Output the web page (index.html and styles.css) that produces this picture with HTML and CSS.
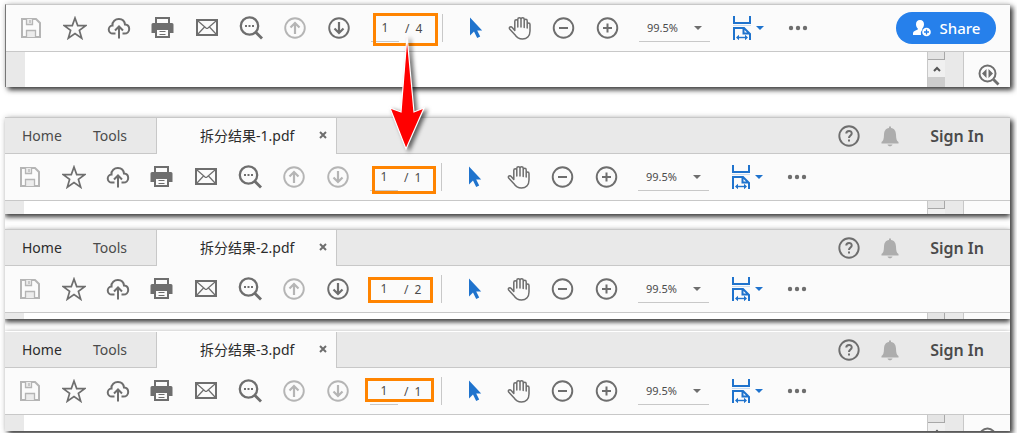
FILE: index.html
```
<!DOCTYPE html>
<html lang="zh">
<head>
    <meta charset="UTF-8">
    <meta name="viewport" content="width=device-width, initial-scale=1.0">
    <title>拆分结果</title>
    <link rel="stylesheet" href="styles.css">
</head>
<body>
    <!-- shared icons -->
    <svg class="sprite" aria-hidden="true">
        <symbol id="save" viewBox="0 0 24 24">
            <path d="M3 3h14l4 4v14H3z" fill="none" stroke="currentColor" stroke-width="2"/>
            <path d="M7.500 3v5.500h6V3M11 4v3M7.500 21v-6.500h9V21" fill="#ececec" stroke="currentColor" stroke-width="1.300"/>
        </symbol>
        <symbol id="star" viewBox="0 0 24 24">
            <path d="M12 2l2.700 7.600h8L16.400 14.400l2.300 7.800L12 17.600l-6.700 4.600 2.300-7.800L1.300 9.600h8z" fill="none" stroke="currentColor" stroke-width="1.700"/>
        </symbol>
        <symbol id="cloud" viewBox="0 0 24 24">
            <path d="M8.500 17.500H6a4 4 0 0 1-.5-8C5 5.500 8.500 2.900 12 3c3.300.1 5.700 2.400 6 5.600 2.600.2 4.200 2 4.200 4.300 0 2.600-2 4.600-4.700 4.600h-2" fill="none" stroke="currentColor" stroke-width="2"/>
            <path d="M12 22.500V11M8 14.500l4-4 4 4" fill="none" stroke="currentColor" stroke-width="2"/>
        </symbol>
        <symbol id="print" viewBox="0 0 24 24">
            <path d="M5 7V2h13v5" fill="none" stroke="currentColor" stroke-width="2"/>
            <path d="M2 7h19a1.500 1.500 0 0 1 1.500 1.500V17H19v-4H4v4H.5V8.500A1.500 1.500 0 0 1 2 7z" fill="currentColor"/>
            <path d="M5 13v8h13v-8z" fill="#fbfbfb" stroke="currentColor" stroke-width="2"/>
            <path d="M8.500 15.500h6M8.500 18.500h6" stroke="currentColor" stroke-width="1"/>
        </symbol>
        <symbol id="mail" viewBox="0 0 24 24">
            <path d="M2 4h20v15H2z" fill="none" stroke="currentColor" stroke-width="2"/>
            <path d="M3 5l8 7q1 .8 2 0l8-7M3 18l6.500-7M21 18l-6.500-7" fill="none" stroke="currentColor" stroke-width="1.200"/>
        </symbol>
        <symbol id="search" viewBox="0 0 24 24">
            <circle cx="10.500" cy="10" r="8.700" fill="none" stroke="currentColor" stroke-width="2.300"/>
            <path d="M16.500 16l6.500 6.500" stroke="currentColor" stroke-width="2.800"/>
            <path d="M6 9h2v2H6zM9.500 9h2v2h-2zM13 9h2v2h-2z" fill="currentColor"/>
        </symbol>
        <symbol id="up" viewBox="0 0 24 24">
            <circle cx="12" cy="12" r="9.800" fill="none" stroke="currentColor" stroke-width="1.900"/>
            <path d="M12 18V7M7.500 11.500L12 7l4.500 4.500" fill="none" stroke="currentColor" stroke-width="2.200"/>
        </symbol>
        <symbol id="down" viewBox="0 0 24 24">
            <circle cx="12" cy="12" r="9.800" fill="none" stroke="currentColor" stroke-width="1.900"/>
            <path d="M12 6v11M7.500 12.500L12 17l4.500-4.500" fill="none" stroke="currentColor" stroke-width="2.200"/>
        </symbol>
        <symbol id="pointer" viewBox="0 0 24 24">
            <path d="M6 1.500v18l4-4 3.200 6.500 3-1.400-3-6h5z" fill="currentColor"/>
        </symbol>
        <symbol id="hand" viewBox="0 0 24 24">
            <path d="M6.800 14.500V5.300c0-2.200 3-2.200 3 0V11 3.300c0-2.200 3.200-2.200 3.200 0V11 3.500c0-2.200 3.200-2.200 3.200 0V11.500 5c0-2.200 3-2.200 3 0v7V8.500c0-2 2.800-2 2.800 0V15c0 5-3.200 8-7.500 8-3.600 0-6-1.600-7.800-4.600L1.600 13c-.9-1.800 1.300-3 2.600-1.600z" fill="none" stroke="currentColor" stroke-width="1.500" stroke-linejoin="round"/>
        </symbol>
        <symbol id="minus" viewBox="0 0 24 24">
            <circle cx="11.500" cy="12" r="9.800" fill="none" stroke="currentColor" stroke-width="1.900"/>
            <path d="M7 12h9" stroke="currentColor" stroke-width="2"/>
        </symbol>
        <symbol id="plus" viewBox="0 0 24 24">
            <circle cx="11.500" cy="12" r="9.800" fill="none" stroke="currentColor" stroke-width="1.900"/>
            <path d="M7 12h9M11.500 7.500v9" stroke="currentColor" stroke-width="2"/>
        </symbol>
        <symbol id="fit" viewBox="0 0 18 24">
            <path d="M1 0v7h16V0M1 24V12h10l6 6v6M10.500 12v5.500H17" fill="none" stroke="currentColor" stroke-width="2"/>
            <path d="M0 9h18v1H0z" fill="#c9dcf1"/>
            <path d="M4.500 21.500h9" stroke="currentColor" stroke-width="1.400"/>
            <path d="M3 21.500l3-2.800v5.600zM15 21.500l-3-2.800v5.600z" fill="currentColor"/>
        </symbol>
        <symbol id="dots" viewBox="0 0 24 24">
            <circle cx="5" cy="12" r="2.200" fill="currentColor"/>
            <circle cx="12" cy="12" r="2.200" fill="currentColor"/>
            <circle cx="19" cy="12" r="2.200" fill="currentColor"/>
        </symbol>
        <symbol id="help" viewBox="0 0 24 24">
            <circle cx="12" cy="12" r="9.700" fill="none" stroke="currentColor" stroke-width="1.900"/>
            <path d="M9.300 9.600c0-3.600 5.500-3.400 5.400-.2 0 2-2.700 2.100-2.700 4.600" fill="none" stroke="currentColor" stroke-width="2"/>
            <path d="M11 15.500h2v2h-2z" fill="currentColor"/>
        </symbol>
        <symbol id="bell" viewBox="0 0 24 24">
            <path d="M11 2.500h2V4c3.500.5 4.800 3 5 6.500.1 4 .6 6.500 2.500 7.500v1.500h-17V18c1.900-1 2.400-3.500 2.500-7.500.2-3.500 1.500-6 5-6.500zM9.500 20.500h5c-.5 2.400-4.500 2.400-5 0z" fill="currentColor"/>
        </symbol>
        <symbol id="close" viewBox="0 0 10 10">
            <path d="M2 2l6 6M8 2l-6 6" stroke="currentColor" stroke-width="2"/>
        </symbol>
        <symbol id="pane" viewBox="0 0 24 24">
            <circle cx="10.500" cy="10.500" r="8" fill="none" stroke="currentColor" stroke-width="2"/>
            <path d="M16.500 16.500l5 5" stroke="currentColor" stroke-width="2.800"/>
            <path d="M9.500 6v9L5 10.500zM11.500 6v9l4.500-4.500z" fill="currentColor"/>
        </symbol>
        <symbol id="person" viewBox="0 0 20 18">
            <path d="M8 1c2.700 0 4 1.800 4 4.300 0 2-.8 3.300-1.700 4.200v1.300A5 5 0 0 0 9 16H1v-2c.3-2 2.500-2.500 4.800-3.500v-1C4.800 8.500 4 7.200 4 5.300 4 2.800 5.300 1 8 1z" fill="currentColor"/>
            <circle cx="14.500" cy="13" r="4.300" fill="currentColor"/>
            <path d="M12 13h5M14.500 10.500v5" stroke="#2680eb" stroke-width="1.300"/>
        </symbol>
    </svg>

    <main>
        <section class="window source">
            <div class="toolbar">
                <button class="tool off" aria-label="Save"><svg><use href="#save"/></svg></button>
                <button class="tool" aria-label="Star"><svg><use href="#star"/></svg></button>
                <button class="tool" aria-label="Upload"><svg><use href="#cloud"/></svg></button>
                <button class="tool" aria-label="Print"><svg><use href="#print"/></svg></button>
                <button class="tool" aria-label="Mail"><svg><use href="#mail"/></svg></button>
                <button class="tool" aria-label="Find"><svg><use href="#search"/></svg></button>
                <button class="tool off" aria-label="Previous page"><svg><use href="#up"/></svg></button>
                <button class="tool" aria-label="Next page"><svg><use href="#down"/></svg></button>
                <div class="pages">
                    <input type="text" value="1" aria-label="Page"><span>/</span><span>4</span>
                    <i class="mark mark-source"></i>
                </div>
                <button class="tool blue" aria-label="Select"><svg><use href="#pointer"/></svg></button>
                <button class="tool" aria-label="Pan"><svg><use href="#hand"/></svg></button>
                <button class="tool" aria-label="Zoom out"><svg><use href="#minus"/></svg></button>
                <button class="tool" aria-label="Zoom in"><svg><use href="#plus"/></svg></button>
                <div class="zoom"><select aria-label="Zoom"><option>99.5%</option></select></div>
                <button class="fit" aria-label="Fit width"><svg><use href="#fit"/></svg></button>
                <button class="tool" aria-label="More"><svg><use href="#dots"/></svg></button>
                <button class="share"><svg><use href="#person"/></svg>Share</button>
            </div>
            <div class="doc">
                <div class="paper"></div>
                <div class="scroll"><b></b><svg viewBox="0 0 8 6"><path d="M1 5l3-3 3 3" fill="none" stroke="#555" stroke-width="2"/></svg><u></u></div>
                <div class="gutter"></div>
                <div class="side"><svg><use href="#pane"/></svg></div>
            </div>
        </section>

        <div class="results">
            <section class="window one">
                <nav class="tabs">
                    <button class="home dim">Home</button>
                    <button class="tools">Tools</button>
                    <div class="tab"><span>拆分结果-1.pdf</span><button aria-label="Close"><svg><use href="#close"/></svg></button></div>
                    <button class="help" aria-label="Help"><svg><use href="#help"/></svg></button>
                    <button class="bell" aria-label="Notifications"><svg><use href="#bell"/></svg></button>
                    <a class="sign" href="#">Sign In</a>
                </nav>
                <div class="toolbar">
                    <button class="tool off" aria-label="Save"><svg><use href="#save"/></svg></button>
                    <button class="tool" aria-label="Star"><svg><use href="#star"/></svg></button>
                    <button class="tool" aria-label="Upload"><svg><use href="#cloud"/></svg></button>
                    <button class="tool" aria-label="Print"><svg><use href="#print"/></svg></button>
                    <button class="tool" aria-label="Mail"><svg><use href="#mail"/></svg></button>
                    <button class="tool" aria-label="Find"><svg><use href="#search"/></svg></button>
                    <button class="tool off" aria-label="Previous page"><svg><use href="#up"/></svg></button>
                    <button class="tool off" aria-label="Next page"><svg><use href="#down"/></svg></button>
                    <div class="pages">
                        <input type="text" value="1" aria-label="Page"><span>/</span><span>1</span>
                        <i class="mark mark-one"></i>
                    </div>
                    <button class="tool blue" aria-label="Select"><svg><use href="#pointer"/></svg></button>
                    <button class="tool" aria-label="Pan"><svg><use href="#hand"/></svg></button>
                    <button class="tool" aria-label="Zoom out"><svg><use href="#minus"/></svg></button>
                    <button class="tool" aria-label="Zoom in"><svg><use href="#plus"/></svg></button>
                    <div class="zoom"><select aria-label="Zoom"><option>99.5%</option></select></div>
                    <button class="fit" aria-label="Fit width"><svg><use href="#fit"/></svg></button>
                    <button class="tool" aria-label="More"><svg><use href="#dots"/></svg></button>
                </div>
                <div class="doc">
                    <div class="paper"></div>
                    <div class="scroll"><b></b></div>
                    <div class="gutter"></div>
                    <div class="side"></div>
                </div>
            </section>

            <section class="window two">
                <nav class="tabs">
                    <button class="home">Home</button>
                    <button class="tools">Tools</button>
                    <div class="tab"><span>拆分结果-2.pdf</span><button aria-label="Close"><svg><use href="#close"/></svg></button></div>
                    <button class="help" aria-label="Help"><svg><use href="#help"/></svg></button>
                    <button class="bell" aria-label="Notifications"><svg><use href="#bell"/></svg></button>
                    <a class="sign" href="#">Sign In</a>
                </nav>
                <div class="toolbar">
                    <button class="tool off" aria-label="Save"><svg><use href="#save"/></svg></button>
                    <button class="tool" aria-label="Star"><svg><use href="#star"/></svg></button>
                    <button class="tool" aria-label="Upload"><svg><use href="#cloud"/></svg></button>
                    <button class="tool" aria-label="Print"><svg><use href="#print"/></svg></button>
                    <button class="tool" aria-label="Mail"><svg><use href="#mail"/></svg></button>
                    <button class="tool" aria-label="Find"><svg><use href="#search"/></svg></button>
                    <button class="tool off" aria-label="Previous page"><svg><use href="#up"/></svg></button>
                    <button class="tool" aria-label="Next page"><svg><use href="#down"/></svg></button>
                    <div class="pages">
                        <input type="text" value="1" aria-label="Page"><span>/</span><span>2</span>
                        <i class="mark mark-two"></i>
                    </div>
                    <button class="tool blue" aria-label="Select"><svg><use href="#pointer"/></svg></button>
                    <button class="tool" aria-label="Pan"><svg><use href="#hand"/></svg></button>
                    <button class="tool" aria-label="Zoom out"><svg><use href="#minus"/></svg></button>
                    <button class="tool" aria-label="Zoom in"><svg><use href="#plus"/></svg></button>
                    <div class="zoom"><select aria-label="Zoom"><option>99.5%</option></select></div>
                    <button class="fit" aria-label="Fit width"><svg><use href="#fit"/></svg></button>
                    <button class="tool" aria-label="More"><svg><use href="#dots"/></svg></button>
                </div>
                <div class="doc">
                    <div class="paper"></div>
                    <div class="scroll"><b></b></div>
                    <div class="gutter"></div>
                    <div class="side"></div>
                </div>
            </section>

            <section class="window three">
                <nav class="tabs">
                    <button class="home">Home</button>
                    <button class="tools">Tools</button>
                    <div class="tab"><span>拆分结果-3.pdf</span><button aria-label="Close"><svg><use href="#close"/></svg></button></div>
                    <button class="help" aria-label="Help"><svg><use href="#help"/></svg></button>
                    <button class="bell" aria-label="Notifications"><svg><use href="#bell"/></svg></button>
                    <a class="sign" href="#">Sign In</a>
                </nav>
                <div class="toolbar">
                    <button class="tool off" aria-label="Save"><svg><use href="#save"/></svg></button>
                    <button class="tool" aria-label="Star"><svg><use href="#star"/></svg></button>
                    <button class="tool" aria-label="Upload"><svg><use href="#cloud"/></svg></button>
                    <button class="tool" aria-label="Print"><svg><use href="#print"/></svg></button>
                    <button class="tool" aria-label="Mail"><svg><use href="#mail"/></svg></button>
                    <button class="tool" aria-label="Find"><svg><use href="#search"/></svg></button>
                    <button class="tool off" aria-label="Previous page"><svg><use href="#up"/></svg></button>
                    <button class="tool off" aria-label="Next page"><svg><use href="#down"/></svg></button>
                    <div class="pages">
                        <input type="text" value="1" aria-label="Page"><span>/</span><span>1</span>
                        <i class="mark mark-three"></i>
                    </div>
                    <button class="tool blue" aria-label="Select"><svg><use href="#pointer"/></svg></button>
                    <button class="tool" aria-label="Pan"><svg><use href="#hand"/></svg></button>
                    <button class="tool" aria-label="Zoom out"><svg><use href="#minus"/></svg></button>
                    <button class="tool" aria-label="Zoom in"><svg><use href="#plus"/></svg></button>
                    <div class="zoom"><select aria-label="Zoom"><option>99.5%</option></select></div>
                    <button class="fit" aria-label="Fit width"><svg><use href="#fit"/></svg></button>
                    <button class="tool" aria-label="More"><svg><use href="#dots"/></svg></button>
                </div>
                <div class="doc">
                    <div class="paper"></div>
                    <div class="scroll"><b></b><svg viewBox="0 0 8 6"><path d="M1 5l3-3 3 3" fill="none" stroke="#555" stroke-width="2"/></svg></div>
                    <div class="gutter"></div>
                    <div class="side"><svg><use href="#pane"/></svg></div>
                </div>
            </section>
        </div>

        <!-- arrow from the source page count to the first result -->
        <svg class="arrow" viewBox="0 0 40 118"><path d="M21 3l7 76 10-4-18 41L4 75l11 4z" fill="#f00" stroke="#fff" stroke-width="1.200"/></svg>
    </main>
</body>
</html>
```
FILE: styles.css
```
* {
    box-sizing: border-box;
}
body {
    margin: 0;
    background: #fff;
    font-family: "Noto Sans", "Noto Sans CJK SC", sans-serif;
    font-size: 14px;
    color: #4b4b4b;
}
.sprite {
    position: absolute;
    width: 0;
    height: 0;
}
main {
    position: relative;
    padding: 4px 7px 2px 5px;
}
button {
    padding: 0;
    border: none;
    background: none;
    font: inherit;
    color: inherit;
}
svg {
    display: block;
    flex: none;
}
.window {
    border-top: 1px solid #c8c8c8;
    background: #fff;
    box-shadow: 0 3px 5px rgba(0, 0, 0, 0.75), 0 0 6px rgba(0, 0, 0, 0.15);
}
.source {
    border-left: 1px solid #777;
    box-shadow: 3px 3px 5px rgba(0, 0, 0, 0.75), 0 0 6px rgba(0, 0, 0, 0.15);
}
.results {
    display: flow-root;
    margin-top: 30px;
    overflow: hidden;
    background: #fff;
    box-shadow: 3px 3px 5px rgba(0, 0, 0, 0.75), 0 0 6px rgba(0, 0, 0, 0.15);
}
.two {
    margin-top: 15px;
}
.three {
    margin-top: 12px;
    border-top-color: transparent;
}

/* tab strip */
.tabs {
    display: flex;
    align-items: center;
    height: 36px;
    padding-right: 26px;
    background: #e9e9e9;
    border-bottom: 1px solid #c8c8c8;
}
.home {
    width: 71px;
    padding-left: 17px;
    text-align: left;
    color: #2c2c2c;
}
.home.dim {
    color: #4b4b4b;
}
.tools {
    width: 80px;
    padding-left: 17px;
    text-align: left;
}
.tab {
    display: flex;
    align-items: center;
    justify-content: space-between;
    width: 181px;
    height: 36px;
    padding: 0 8px 2px 43px;
    background: #fbfbfb;
    border: 1px solid #c8c8c8;
    border-width: 0 1px;
    color: #2c2c2c;
}
/* the open tab runs into the toolbar */
.tabs .tab {
    align-self: flex-start;
}
.tab svg {
    width: 10px;
    height: 10px;
    color: #6e6e6e;
}
.help {
    margin-left: auto;
    color: #6e6e6e;
}
.help svg, .bell svg {
    width: 24px;
    height: 24px;
}
.bell {
    margin: 0 28px 0 17px;
    color: #adadad;
}
.sign {
    font-size: 16px;
    font-weight: 600;
    line-height: 20px;
    color: #4b4b4b;
    text-decoration: none;
}

/* toolbar */
.toolbar {
    display: flex;
    align-items: center;
    height: 47px;
    padding-left: 3px;
    background: #fbfbfb;
    border-bottom: 1px solid #c8c8c8;
}
.tool {
    display: flex;
    justify-content: center;
    width: 44px;
    color: #6e6e6e;
}
.tool svg {
    width: 24px;
    height: 24px;
}
.off {
    color: #b5b5b5;
}
.blue {
    color: #1f73cd;
}
.pages {
    position: relative;
    display: flex;
    align-items: center;
    gap: 6px;
    width: 82px;
    height: 28px;
    margin-right: 11px;
    padding-left: 10px;
    border-right: 1px solid #c8c8c8;
    font-size: 12px;
}
.pages input {
    width: 28px;
    height: 28px;
    padding: 0;
    border: none;
    border-bottom: 1px solid #c8c8c8;
    background: none;
    font: inherit;
    color: inherit;
    text-align: center;
}
/* highlight round the page count */
.mark {
    position: absolute;
    border: 3px solid #ff8400;
}
.mark-source {
    left: 12px;
    top: -1px;
    width: 65px;
    height: 33px;
}
.mark-one {
    left: 12px;
    top: 3px;
    width: 64px;
    height: 28px;
}
.mark-two {
    left: 8px;
    top: 2px;
    width: 65px;
    height: 26px;
}
.mark-three {
    left: 5px;
    top: 1px;
    width: 69px;
    height: 24px;
}
.zoom {
    position: relative;
    width: 71px;
    margin: 0 13px 0 9px;
    border-bottom: 1px solid #c8c8c8;
}
.zoom select {
    display: block;
    width: 100%;
    height: 27px;
    padding: 0 8px;
    appearance: none;
    border: none;
    background: none;
    font: inherit;
    font-size: 11px;
    color: inherit;
}
.zoom::after, .fit::after {
    content: "";
    border: 4px solid transparent;
    border-top-color: currentColor;
    border-bottom: none;
}
.zoom::after {
    position: absolute;
    right: 8px;
    top: 12px;
    color: #6e6e6e;
}
.fit {
    display: flex;
    align-items: center;
    gap: 5px;
    width: 53px;
    padding-left: 10px;
    color: #1f73cd;
}
.fit svg {
    width: 18px;
    height: 24px;
}
.share {
    display: flex;
    align-items: center;
    justify-content: center;
    gap: 8px;
    width: 100px;
    height: 32px;
    margin: 0 14px 0 auto;
    border-radius: 16px;
    background: #2680eb;
    color: #fff;
    font-size: 15px;
    font-weight: 500;
}
.share svg {
    width: 20px;
    height: 18px;
}

/* document strip under the toolbar */
.doc {
    display: flex;
    height: 13px;
    overflow: hidden;
}
.source .doc {
    height: 35px;
}
.two .doc {
    height: 6px;
}
.three .doc {
    height: 16px;
}
.paper {
    flex: 1;
    border-left: 19px solid #e9e9e9;
}
.scroll {
    width: 18px;
    border-left: 1px solid #c8c8c8;
    background: #f0f0f0;
}
.scroll b {
    display: block;
    height: 8px;
    border: 1px solid #a8a8a8;
    border-width: 0 1px 1px 0;
    background: #e4e4e4;
}
.scroll svg {
    width: 8px;
    height: 6px;
    margin: 6px auto 5px;
}
.scroll u {
    display: block;
    height: 20px;
    background: #cdcdcd;
}
.gutter {
    width: 18px;
    background: #e9e9e9;
}
.side {
    width: 47px;
    padding: 11px 0 0 13px;
    border-left: 1px solid #c8c8c8;
    background: #fbfbfb;
}
.side svg {
    width: 24px;
    height: 24px;
    color: #6e6e6e;
}
.arrow {
    position: absolute;
    left: 386px;
    top: 33px;
    width: 40px;
    height: 118px;
    overflow: visible;
    filter: drop-shadow(3px 2px 2px rgba(0, 0, 0, 0.6));
}
```
